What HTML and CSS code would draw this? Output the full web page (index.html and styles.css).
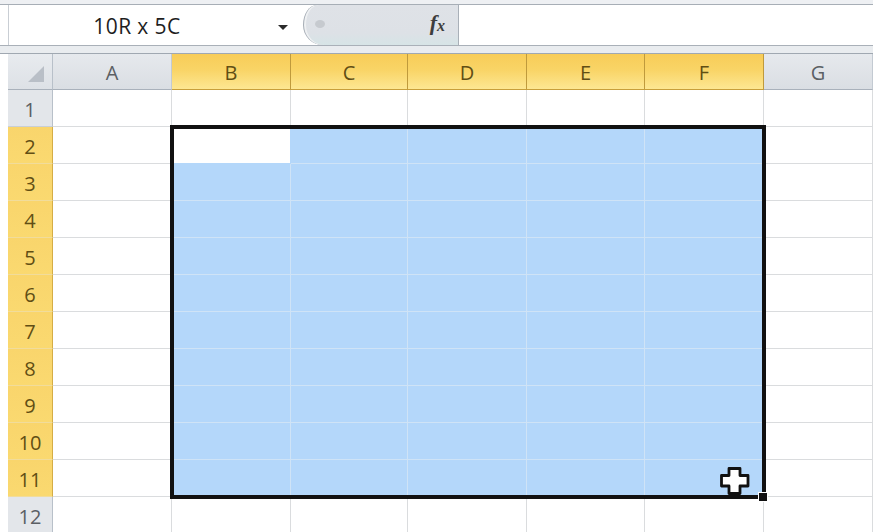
FILE: index.html
```html
<!DOCTYPE html>
<html lang="en">
<head>
<meta charset="utf-8">
<title>Sheet1</title>
<link rel="stylesheet" href="styles.css">
</head>
<body>
<div class="app">
  <div class="top-strip"></div>
  <div class="formula-bar">
    <div class="name-box">
      <span class="name-text">10R x 5C</span>
      <span class="drop"><span class="caret"></span></span>
    </div>
    <div class="fx-area">
      <span class="grip"></span>
      <span class="fx"><span class="fx-f">f</span><span class="fx-x">x</span></span>
    </div>
    <div class="formula-input"></div>
  </div>
  <div class="band"></div>

  <div class="sheet">
    <div class="grid">
      <div class="corner"><svg width="18" height="18" viewBox="0 0 18 18"><polygon points="17,1 17,17 1,17" fill="#b9bfc7"/></svg></div>
      <div class="hd">A</div><div class="hd on">B</div><div class="hd on">C</div><div class="hd on">D</div><div class="hd on">E</div><div class="hd on">F</div><div class="hd">G</div>

      <div class="rh">1</div><div class="c"></div><div class="c"></div><div class="c"></div><div class="c"></div><div class="c"></div><div class="c"></div><div class="c"></div>
      <div class="rh on">2</div><div class="c"></div><div class="c act"></div><div class="c s"></div><div class="c s"></div><div class="c s"></div><div class="c s"></div><div class="c"></div>
      <div class="rh on">3</div><div class="c"></div><div class="c s"></div><div class="c s"></div><div class="c s"></div><div class="c s"></div><div class="c s"></div><div class="c"></div>
      <div class="rh on">4</div><div class="c"></div><div class="c s"></div><div class="c s"></div><div class="c s"></div><div class="c s"></div><div class="c s"></div><div class="c"></div>
      <div class="rh on">5</div><div class="c"></div><div class="c s"></div><div class="c s"></div><div class="c s"></div><div class="c s"></div><div class="c s"></div><div class="c"></div>
      <div class="rh on">6</div><div class="c"></div><div class="c s"></div><div class="c s"></div><div class="c s"></div><div class="c s"></div><div class="c s"></div><div class="c"></div>
      <div class="rh on">7</div><div class="c"></div><div class="c s"></div><div class="c s"></div><div class="c s"></div><div class="c s"></div><div class="c s"></div><div class="c"></div>
      <div class="rh on">8</div><div class="c"></div><div class="c s"></div><div class="c s"></div><div class="c s"></div><div class="c s"></div><div class="c s"></div><div class="c"></div>
      <div class="rh on">9</div><div class="c"></div><div class="c s"></div><div class="c s"></div><div class="c s"></div><div class="c s"></div><div class="c s"></div><div class="c"></div>
      <div class="rh on">10</div><div class="c"></div><div class="c s"></div><div class="c s"></div><div class="c s"></div><div class="c s"></div><div class="c s"></div><div class="c"></div>
      <div class="rh on">11</div><div class="c"></div><div class="c s"></div><div class="c s"></div><div class="c s"></div><div class="c s"></div><div class="c s"></div><div class="c"></div>
      <div class="rh">12</div><div class="c"></div><div class="c"></div><div class="c"></div><div class="c"></div><div class="c"></div><div class="c"></div><div class="c"></div>
    </div>

    <!-- selection outline B2:F11, its fill handle and the mouse pointer -->
    <div class="selection"></div>
    <div class="fill-handle"></div>
    <svg class="pointer" width="30" height="29" viewBox="0 0 30 29">
      <path d="M9 1.5 H20 V8.5 H28 V19 H20 V26.5 H9 V19 H1.5 V8.5 H9 Z" fill="#fff" stroke="#111" stroke-width="2.8" stroke-linejoin="round"/>
    </svg>
  </div>
</div>
</body>
</html>
```

FILE: styles.css
```css
* {
  box-sizing: border-box;
}

html, body {
  margin: 0;
  padding: 0;
  background: #ffffff;
  overflow: hidden;
}

body {
  font-family: "Open Sans", "Liberation Sans", sans-serif;
  width: 873px;
  height: 532px;
}

/* ---------- formula bar ---------- */
.top-strip {
  height: 4px;
  background: #eef0f3;
}

.formula-bar {
  display: flex;
  height: 42px;
  padding-left: 8px;
  border-top: 1px solid #a7aeb6;
  border-bottom: 1px solid #a9b0b8;
  background: #ffffff;
}

.name-box {
  width: 295px;
  display: flex;
  align-items: center;
  border-left: 1px solid #c9ced4;
}

.name-text {
  flex: 1;
  text-align: center;
  font-size: 21px;
  letter-spacing: 0.4px;
  color: #1e1e1e;
  padding-right: 10px;
  padding-top: 2px;
}

.drop {
  width: 28px;
  display: flex;
  justify-content: flex-start;
  padding-left: 3px;
  margin-top: 4px;
}

.caret {
  width: 0;
  height: 0;
  border-left: 5px solid transparent;
  border-right: 5px solid transparent;
  border-top: 5px solid #2b2b2b;
}

.fx-area {
  width: 156px;
  position: relative;
  display: flex;
  align-items: center;
  justify-content: flex-end;
  padding-right: 13px;
  background: linear-gradient(#dfe2e7 0%, #dde1e6 70%, #d6e4e6 100%);
  border-left: 1.5px solid #a6adb5;
  border-right: 1px solid #a9b0b8;
  border-radius: 14px 0 0 20px / 20px 0 0 20px;
  box-shadow: inset 2px 0 0 #eef0f2;
}

.grip {
  position: absolute;
  left: 11px;
  top: 15px;
  width: 10px;
  height: 8px;
  border-radius: 50%;
  background: #c6cacf;
}

.fx {
  font-family: "Liberation Serif", "DejaVu Serif", serif;
  font-style: italic;
  font-weight: bold;
  color: #3d3d3d;
  margin-top: -4px;
}

.fx-f {
  font-size: 22px;
}

.fx-x {
  font-size: 16px;
  position: relative;
  top: 1px;
}

.formula-input {
  flex: 1;
  background: #ffffff;
}

.band {
  height: 8px;
  background: #e9ecef;
  border-bottom: 1px solid #a0a8b1;
}

/* ---------- sheet grid ---------- */
.sheet {
  position: relative;
  padding-left: 8px;
}

.grid {
  display: grid;
  grid-template-columns: 45px 119px 119px 117px 119px 118px 119px 1fr;
  grid-template-rows: 36px repeat(12, 37px);
}

.corner,
.hd,
.rh,
.c {
  border-right: 1px solid #dadcde;
  border-bottom: 1px solid #dadcde;
}

.corner {
  display: flex;
  align-items: flex-end;
  justify-content: flex-end;
  padding: 0 7px 6px 0;
  background: linear-gradient(#e8ebef, #dde1e6);
  border-right-color: #b8c0c9;
  border-bottom-color: #a9b1bb;
}

.hd,
.rh {
  display: flex;
  align-items: center;
  justify-content: center;
  font-size: 20px;
  color: #5b5f64;
}

.hd {
  padding-top: 2px;
  background: linear-gradient(#e6e9ed, #dadee3);
  border-right-color: #c3cad2;
  border-bottom-color: #a9b1bb;
}

.hd.on {
  background: linear-gradient(#f8cc58 0%, #f9d466 45%, #fde792 100%);
  border-right-color: #bf9a3c;
  border-bottom-color: #c89f3a;
  color: #614e14;
}

.rh {
  background: #e3e6ea;
  border-right-color: #b8c0c9;
  border-bottom-color: #c9cfd6;
  padding-top: 2px;
}

.rh.on {
  background: linear-gradient(#f9d56c, #fad970);
  border-right-color: #d5ad45;
  border-bottom-color: #f1dc9b;
  color: #614e14;
}

.c {
  background: #ffffff;
}

.c.s {
  background: #b4d7fa;
  border-right-color: #cfe3f6;
  border-bottom-color: #cfe3f6;
}

.c.act {
  background: #ffffff;
  border-right-color: #b4d7fa;
  border-bottom-color: #b4d7fa;
}

/* selection outline sits over the cells */
.selection {
  position: absolute;
  left: 170px;
  top: 71px;
  width: 596px;
  height: 374px;
  border: 4px solid #111111;
  pointer-events: none;
}

.fill-handle {
  position: absolute;
  left: 758px;
  top: 438px;
  width: 10px;
  height: 10px;
  background: #111111;
  border: 1px solid #ffffff;
}

.pointer {
  position: absolute;
  left: 720px;
  top: 413px;
}
```
